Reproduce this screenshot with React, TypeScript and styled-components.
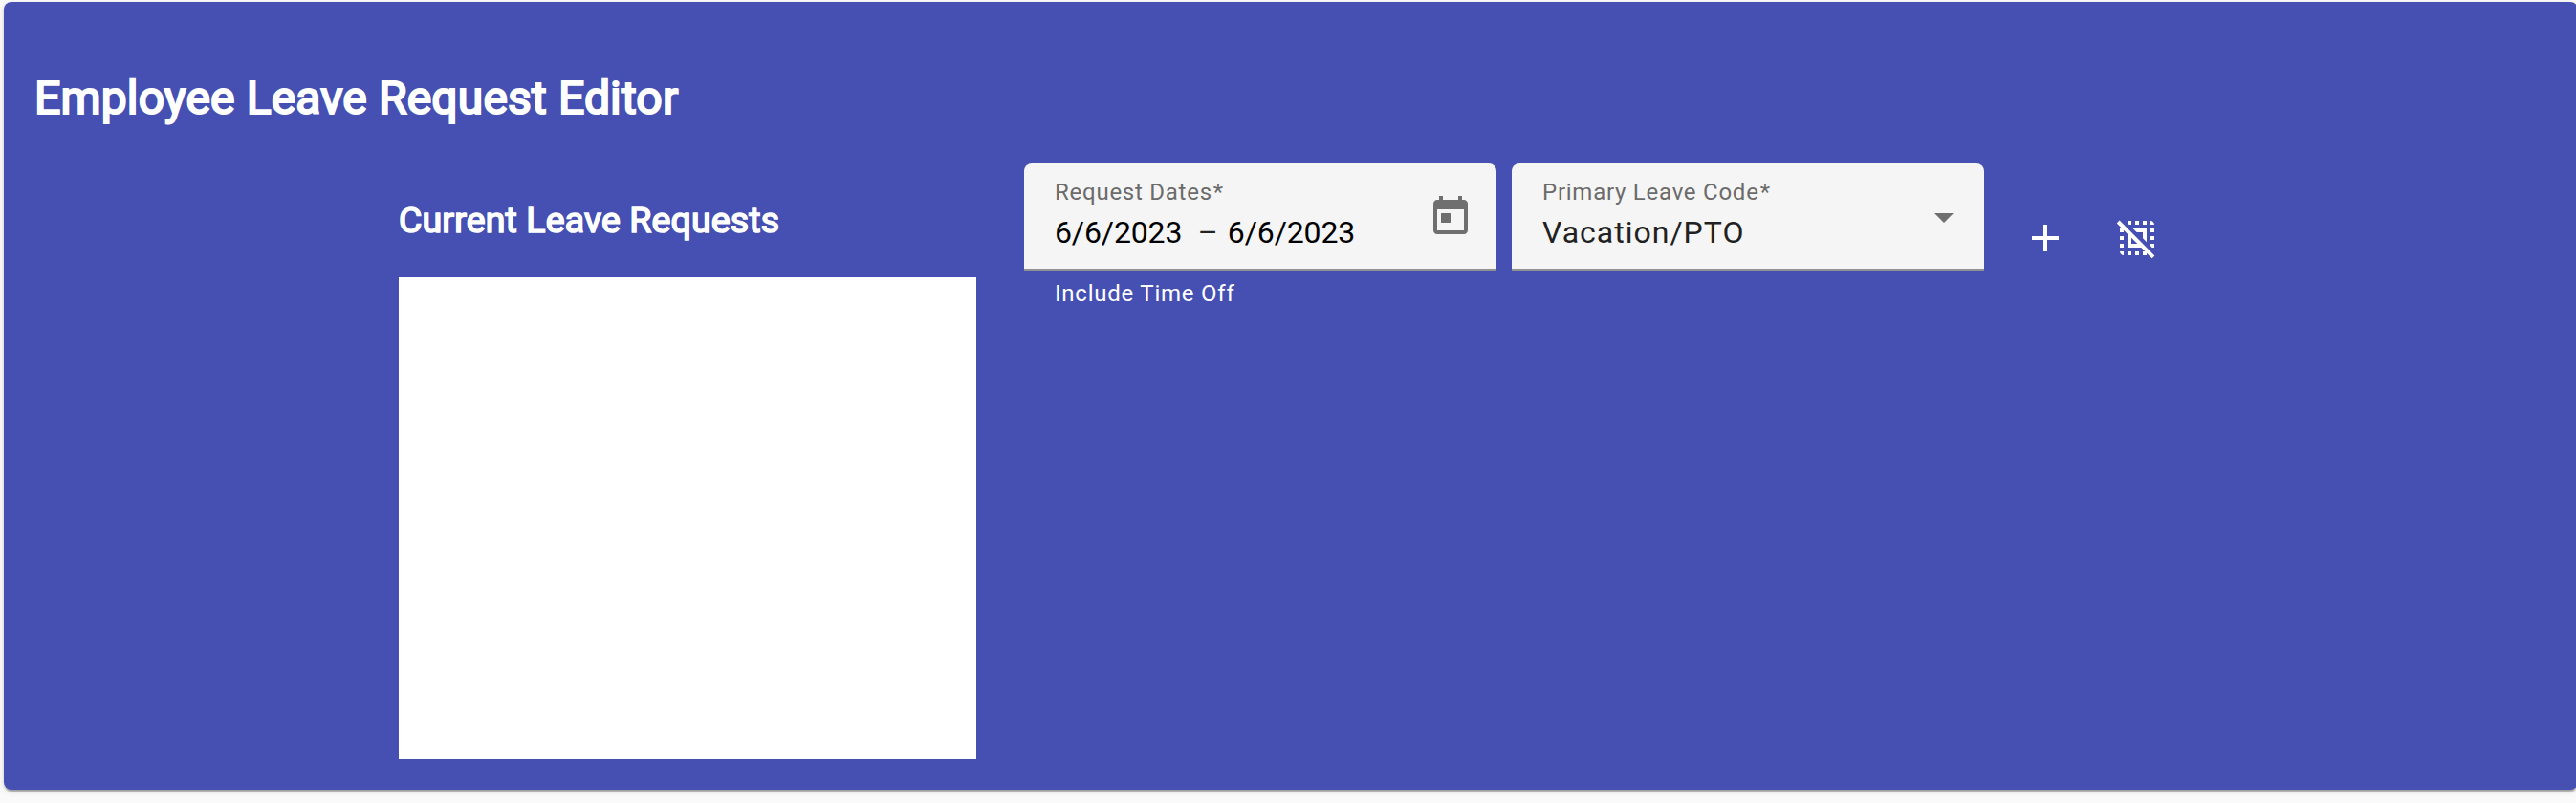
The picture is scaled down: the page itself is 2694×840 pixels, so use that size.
import React from 'react';
import styled, { createGlobalStyle } from 'styled-components';
import { MdAdd, MdDeselect } from 'react-icons/md';

const GlobalStyle = createGlobalStyle`
  html, body { margin: 0; background: #fafafa; overflow: hidden; }
  body { font-family: Roboto, "Liberation Sans", sans-serif; -webkit-font-smoothing: antialiased; }
  * { box-sizing: border-box; }
`;

const Page = styled.main`
  height: 840px;
  padding: 2px 0 0 4px;
  overflow: hidden;
`;

const Card = styled.section`
  width: 2692px;
  height: 824px;
  padding: 73px 32px 0;
  border-radius: 8px;
  background: #4550b2;
  color: #fff;
  box-shadow: 0 4px 2px -2px rgba(0, 0, 0, 0.2), 0 2px 2px rgba(0, 0, 0, 0.14),
    0 2px 6px rgba(0, 0, 0, 0.12);
`;

const Title = styled.h1`
  margin: 0;
  font-size: 48px;
  line-height: 56px;
  font-weight: 400;
  letter-spacing: 0.16px;
  -webkit-text-stroke: 2.1px #fff;
  text-shadow: 0.4px 0 #fff, -0.4px 0 #fff;
`;

const Columns = styled.div`
  display: flex;
  align-items: flex-start;
  padding: 40px 0 0 381px;
`;

const ListColumn = styled.div`
  width: 604px;
  margin-right: 50px;
`;

const Subtitle = styled.h2`
  margin: 33px 0 33px;
  font-size: 37.44px;
  line-height: 53px;
  font-weight: 400;
  letter-spacing: 0.16px;
  -webkit-text-stroke: 1.5px #fff;
  text-shadow: 0.4px 0 #fff, -0.4px 0 #fff;
`;

const RequestList = styled.div`
  height: 504px;
  background: #fff;
`;

const Field = styled.div`
  width: 494px;
  margin-right: 16px;
`;

const FieldBox = styled.div`
  display: flex;
  justify-content: space-between;
  height: 112px;
  padding: 16px 24px 0 32px;
  border-bottom: 2px solid #919191;
  border-radius: 8px 8px 0 0;
  background: #f5f5f5;
`;

const Label = styled.div`
  font-size: 24px;
  line-height: 28px;
  letter-spacing: 0.75px;
  color: #6b6b6b;
`;

const Required = styled.span`
  margin-left: 1px;
`;

const Value = styled.div<{ $color: string; $spacing: string }>`
  display: flex;
  margin-top: 6px;
  font-size: 32px;
  line-height: 44px;
  letter-spacing: ${(p) => p.$spacing};
  color: ${(p) => p.$color};
`;

const Separator = styled.span`
  width: 47.5px;
  padding-left: 16.5px;
  color: #222;
`;

const Hint = styled.div`
  padding: 8px 32px 0;
  font-size: 24px;
  line-height: 32px;
  letter-spacing: 0.77px;
`;

const CalendarIcon = styled.svg`
  width: 48px;
  height: 48px;
  margin-top: 16px;
  fill: #6f6f6f;
`;

const Arrow = styled.svg`
  width: 20px;
  height: 10px;
  margin: 36px 8px 0 0;
  fill: #6f6f6f;
`;

const IconButton = styled.button`
  display: flex;
  width: 96px;
  height: 96px;
  margin: 30px 0 0;
  padding: 24px;
  border: 0;
  background: transparent;
  color: #fff;
  svg { width: 48px; height: 48px; }
`;

export default function App() {
  return (
    <Page>
      <GlobalStyle />
      <Card>
        <Title>Employee Leave Request Editor</Title>
        <Columns>
          <ListColumn>
            <Subtitle>Current Leave Requests</Subtitle>
            <RequestList />
          </ListColumn>
          <Field>
            <FieldBox>
              <div>
                <Label>Request Dates<Required>*</Required></Label>
                <Value $color="#000" $spacing="-0.12px">
                  <span>6/6/2023</span>
                  <Separator>–</Separator>
                  <span>6/6/2023</span>
                </Value>
              </div>
              <CalendarIcon viewBox="0 0 24 24">
                <path d="M19 3h-1V1h-2v2H8V1H6v2H5c-1.11 0-1.99.9-1.99 2L3 19c0 1.1.89 2 2 2h14c1.1 0 2-.9 2-2V5c0-1.1-.9-2-2-2zm0 16H5V8h14v11zM7 10h5v5H7z" />
              </CalendarIcon>
            </FieldBox>
            <Hint>Include Time Off</Hint>
          </Field>
          <Field>
            <FieldBox>
              <div>
                <Label>Primary Leave Code<Required>*</Required></Label>
                <Value $color="#212121" $spacing="1px">Vacation/PTO</Value>
              </div>
              <Arrow viewBox="0 0 20 10">
                <path d="M0 0h20L10 10z" />
              </Arrow>
            </FieldBox>
          </Field>
          <IconButton aria-label="Add"><MdAdd /></IconButton>
          <IconButton aria-label="Deselect"><MdDeselect /></IconButton>
        </Columns>
      </Card>
    </Page>
  );
}
